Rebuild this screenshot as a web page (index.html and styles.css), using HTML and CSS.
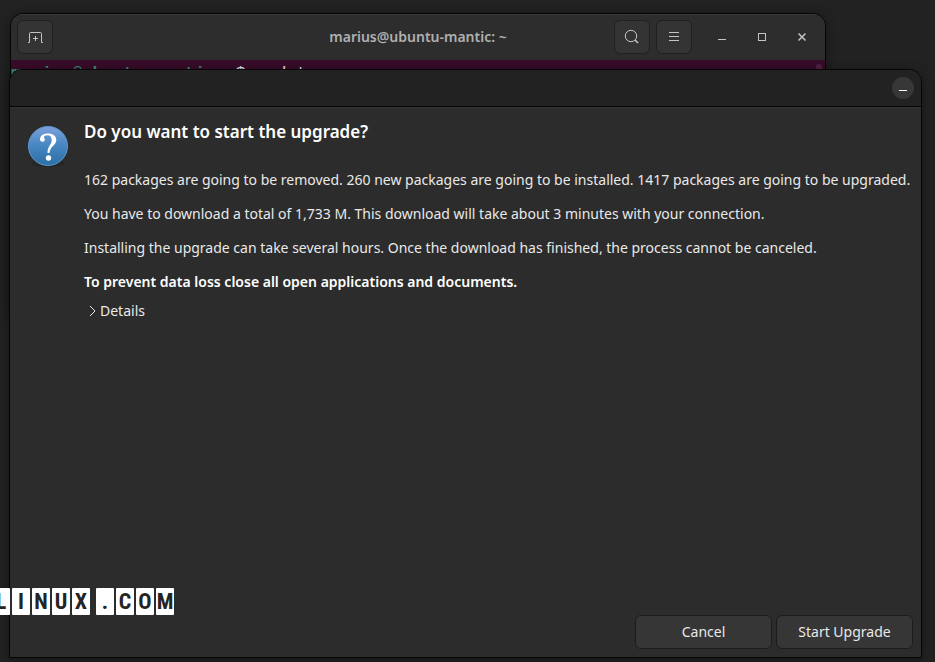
FILE: index.html
```
<!DOCTYPE html>
<html lang="en">
<head>
    <meta charset="utf-8"/>
    <title>Upgrade</title>
    <link rel="stylesheet" href="styles.css">
</head>
<body>
    <main class="desktop">
        <section class="window terminal">
            <header class="terminal-bar">
                <button class="tool-btn" aria-label="New tab">
                    <svg width="16" height="16" viewBox="0 0 16 16"><path d="M1 13.500h1.500v-9q0-1 1-1h10q1 0 1 1v9h1.500M8.500 7v5M6 9.500h5"/></svg>
                </button>
                <h1 class="terminal-title">marius@ubuntu-mantic: ~</h1>
                <div class="terminal-tools">
                    <button class="tool-btn" aria-label="Search">
                        <svg width="16" height="16" viewBox="0 0 16 16"><circle cx="7" cy="7" r="5.700"/><path d="M11 11l3 3" stroke-width="1.600"/></svg>
                    </button>
                    <button class="tool-btn" aria-label="Menu">
                        <svg width="16" height="16" viewBox="0 0 16 16"><path d="M3 3.500h10M3 7.500h10M3 11.500h10"/></svg>
                    </button>
                    <div class="window-controls">
                        <button class="control-btn" aria-label="Minimize">
                            <svg width="16" height="16" viewBox="0 0 16 16"><path d="M4 10.500h8"/></svg>
                        </button>
                        <button class="control-btn" aria-label="Maximize">
                            <svg width="16" height="16" viewBox="0 0 16 16"><rect x="4.500" y="4.500" width="7" height="7"/></svg>
                        </button>
                        <button class="control-btn" aria-label="Close">
                            <svg width="16" height="16" viewBox="0 0 16 16"><path d="M4.500 4.500l7 7M11.500 4.500l-7 7" stroke-width="1.500"/></svg>
                        </button>
                    </div>
                </div>
            </header>
            <div class="terminal-screen">
                <span class="prompt-user">marius@ubuntu-mantic</span>:<span class="prompt-path">~</span>$ update
                <span class="scroll-thumb"></span>
            </div>
        </section>

        <section class="window dialog" role="dialog" aria-labelledby="question">
            <header class="dialog-bar">
                <button class="round-btn" aria-label="Minimize">
                    <svg width="16" height="16" viewBox="0 0 16 16"><path d="M4 10.500h8"/></svg>
                </button>
            </header>
            <div class="dialog-body">
                <svg class="question-icon" width="42" height="42" viewBox="0 0 42 42" aria-hidden="true">
                    <defs>
                        <linearGradient id="blue" x1="0" y1="0" x2="0" y2="1">
                            <stop offset="0" stop-color="#7d9fdc"/>
                            <stop offset="0.5" stop-color="#4586c0"/>
                            <stop offset="1" stop-color="#2c6ea5"/>
                        </linearGradient>
                    </defs>
                    <ellipse cx="21" cy="38" rx="17" ry="4" fill="#252525"/>
                    <circle cx="21" cy="21" r="19.500" fill="url(#blue)" stroke="#5b9bd0"/>
                    <path d="M13 14.500c0-4 3.500-6 8-6 5 0 8.300 2.500 8.300 6.400 0 5.300-6.400 6.300-6.800 13.100h-2c-.2-7 4.200-8 4.200-13 0-3-1.500-4.800-4.200-4.800-2.200 0-3.500.9-3.500 2 0 1 .8 1.400.8 2.600 0 1.200-.9 1.900-2.200 1.900-1.500 0-2.600-.8-2.600-2.200z" fill="#fff"/>
                    <circle cx="21.500" cy="33" r="2.700" fill="#fff"/>
                </svg>
                <div class="message">
                    <h2 id="question">Do you want to start the upgrade?</h2>
                    <p>162 packages are going to be removed. 260 new packages are going to be installed. 1417 packages are going to be upgraded.</p>
                    <p>You have to download a total of 1,733 M. This download will take about 3 minutes with your connection.</p>
                    <p>Installing the upgrade can take several hours. Once the download has finished, the process cannot be canceled.</p>
                    <p class="warning">To prevent data loss close all open applications and documents.</p>
                    <button class="details-btn" aria-expanded="false">
                        <svg width="16" height="16" viewBox="0 0 16 16"><path d="M6 3l5 5-5 5"/></svg>Details
                    </button>
                </div>
            </div>
            <footer class="dialog-actions">
                <button class="action-btn">Cancel</button>
                <button class="action-btn">Start Upgrade</button>
            </footer>
        </section>

        <div class="watermark">
            <span>L</span><span>I</span><span>N</span><span>U</span><span>X</span><span class="dot">.</span><span>C</span><span>O</span><span>M</span>
        </div>
    </main>
</body>
</html>
```
FILE: styles.css
```
* {
    box-sizing: border-box;
}
html, body {
    margin: 0;
    height: 100%;
    overflow: hidden;
    background-color: #222222;
    color: #e9e9e9;
    font-family: "Noto Sans", sans-serif;
    font-size: 14px;
}
button {
    margin: 0;
    padding: 0;
    border: none;
    background: none;
    color: inherit;
    font: inherit;
    cursor: pointer;
}
svg {
    display: block;
    fill: none;
    stroke: currentColor;
}
.question-icon {
    stroke: none;
}
.desktop {
    position: relative;
    height: 100%;
    overflow: hidden;
}
.window {
    position: absolute;
    border: 1px solid #050505;
    border-radius: 13px 13px 0 0;
    overflow: hidden;
    box-shadow: 0 2px 12px rgba(0, 0, 0, 0.4);
}

/* terminal */
.terminal {
    top: 13px;
    left: 10px;
    right: 109px;
    height: 300px;
    background-color: #380c2a;
}
.terminal-bar {
    display: grid;
    grid-template-columns: 1fr auto 1fr;
    align-items: center;
    height: 46px;
    padding: 0 6px 2px;
    background-color: #2d2d2d;
    border-top: 1px solid #3a3a3a;
    color: #c4c4c4;
}
.terminal-title {
    margin: 0;
    font-size: 14px;
    font-weight: 600;
    color: #b0b0b0;
}
.terminal-tools {
    display: flex;
    align-items: center;
    justify-content: flex-end;
    gap: 6px;
}
.tool-btn {
    display: flex;
    align-items: center;
    justify-content: center;
    width: 36px;
    height: 34px;
    background-color: #343434;
    border: 1px solid #202020;
    border-radius: 6px;
}
.window-controls {
    display: flex;
    gap: 16px;
    padding: 0 5px 0 12px;
}
.control-btn {
    display: flex;
    align-items: center;
    justify-content: center;
    width: 24px;
    height: 24px;
}
.terminal-screen {
    position: relative;
    font: 17px/28px "Liberation Mono", monospace;
    white-space: nowrap;
}
.prompt-user {
    font-weight: bold;
    color: #3a8f72;
}
.prompt-path {
    font-weight: bold;
    color: #4a6f9f;
}
.scroll-thumb {
    position: absolute;
    top: 4px;
    right: 3px;
    width: 6px;
    height: 60px;
    border-radius: 3px;
    background-color: #4f2142;
}

/* upgrade dialog */
.dialog {
    top: 69px;
    right: 13px;
    bottom: 4px;
    left: 9px;
    display: flex;
    flex-direction: column;
    background-color: #2c2c2c;
}
.dialog-bar {
    display: flex;
    align-items: center;
    justify-content: flex-end;
    height: 37px;
    padding: 0 7px;
    background-color: #222222;
    border-bottom: 1px solid #050505;
}
.round-btn {
    display: flex;
    align-items: center;
    justify-content: center;
    width: 22px;
    height: 22px;
    border-radius: 50%;
    background-color: #373737;
    color: #ffffff;
}
.dialog-body {
    flex: 1;
    display: flex;
    align-items: flex-start;
    gap: 15px;
    padding: 13px 6px 0 17px;
    border-top: 1px solid #343434;
}
.question-icon {
    flex-shrink: 0;
    margin-top: 4px;
}
.message {
    flex: 1;
    line-height: 18px;
}
.message h2 {
    margin: 0 0 28px;
    font-size: 17px;
    font-weight: 600;
    line-height: 22px;
    color: #ffffff;
}
.message p {
    margin: 0 0 16px;
    white-space: nowrap;
}
.message .warning {
    margin-bottom: 10px;
    font-weight: 600;
    color: #ffffff;
}
.details-btn {
    display: flex;
    align-items: center;
    line-height: 20px;
}
.dialog-actions {
    display: flex;
    justify-content: flex-end;
    gap: 4px;
    padding: 8px;
}
.action-btn {
    height: 34px;
    width: 137px;
    padding-bottom: 2px;
    background-color: #363636;
    border: 1px solid #1c1c1c;
    border-radius: 6px;
}

/* site watermark over the corner */
.watermark {
    position: absolute;
    left: -8px;
    bottom: 47px;
    display: flex;
    gap: 2px;
}
.watermark span {
    width: 18px;
    height: 27px;
    background-color: #ffffff;
    border-radius: 1px;
    color: #242424;
    font: bold 22px/28px "Roboto Condensed", Roboto, sans-serif;
    text-align: center;
}
.watermark .dot {
    margin-left: 4px;
}
```
